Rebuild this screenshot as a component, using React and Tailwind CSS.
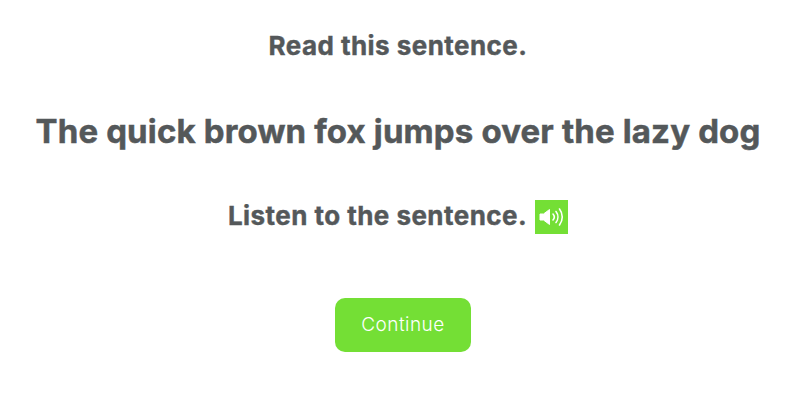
export default function App() {
  return (
    <div className="flex h-[405px] w-[806px] flex-col items-center overflow-hidden bg-white font-['Inter',sans-serif] text-[#54585a]">
      <h2 className="mt-[28px] pr-[10px] text-[26px] leading-[36px] font-bold whitespace-nowrap tracking-[0.45px] [-webkit-text-stroke:0.4px_#54585a]">Read this sentence.</h2>
      <h1 className="mt-[42px] pr-[10px] text-[33px] leading-[50px] font-bold whitespace-nowrap tracking-[0.15px] [-webkit-text-stroke:0.5px_#54585a]">The quick brown fox jumps over the lazy dog</h1>
      <div className="mt-[42px] flex h-[36px] items-start gap-[8px] pr-[10px]">
        <span className="text-[26px] leading-[36px] font-bold whitespace-nowrap tracking-[0.45px] [-webkit-text-stroke:0.4px_#54585a]">Listen to the sentence.</span>
        <span className="mt-[2px] flex h-[34px] w-[33px] items-center justify-center bg-[#74df35]">
          <svg width="26" height="20" viewBox="0 0 26 20" fill="none">
            <path d="M1 7h3.5L10.5 2.5v15L4.5 13H1z" fill="#fff" stroke="#fff" strokeWidth="1" strokeLinejoin="round" />
            <path d="M14 7a4.5 4.5 0 0 1 0 6" stroke="#fff" strokeWidth="1.6" strokeLinecap="round" />
            <path d="M17 4.5a9 9 0 0 1 0 11" stroke="#fff" strokeWidth="1.6" strokeLinecap="round" />
            <path d="M20.5 2a13 13 0 0 1 0 16" stroke="#fff" strokeWidth="1.6" strokeLinecap="round" />
          </svg>
        </span>
      </div>
      <button className="mt-[64px] h-[54px] w-[136px] rounded-[10px] bg-[#74df35] text-center text-[19px] font-light tracking-[0.45px] text-white">Continue</button>
    </div>
  );
}
